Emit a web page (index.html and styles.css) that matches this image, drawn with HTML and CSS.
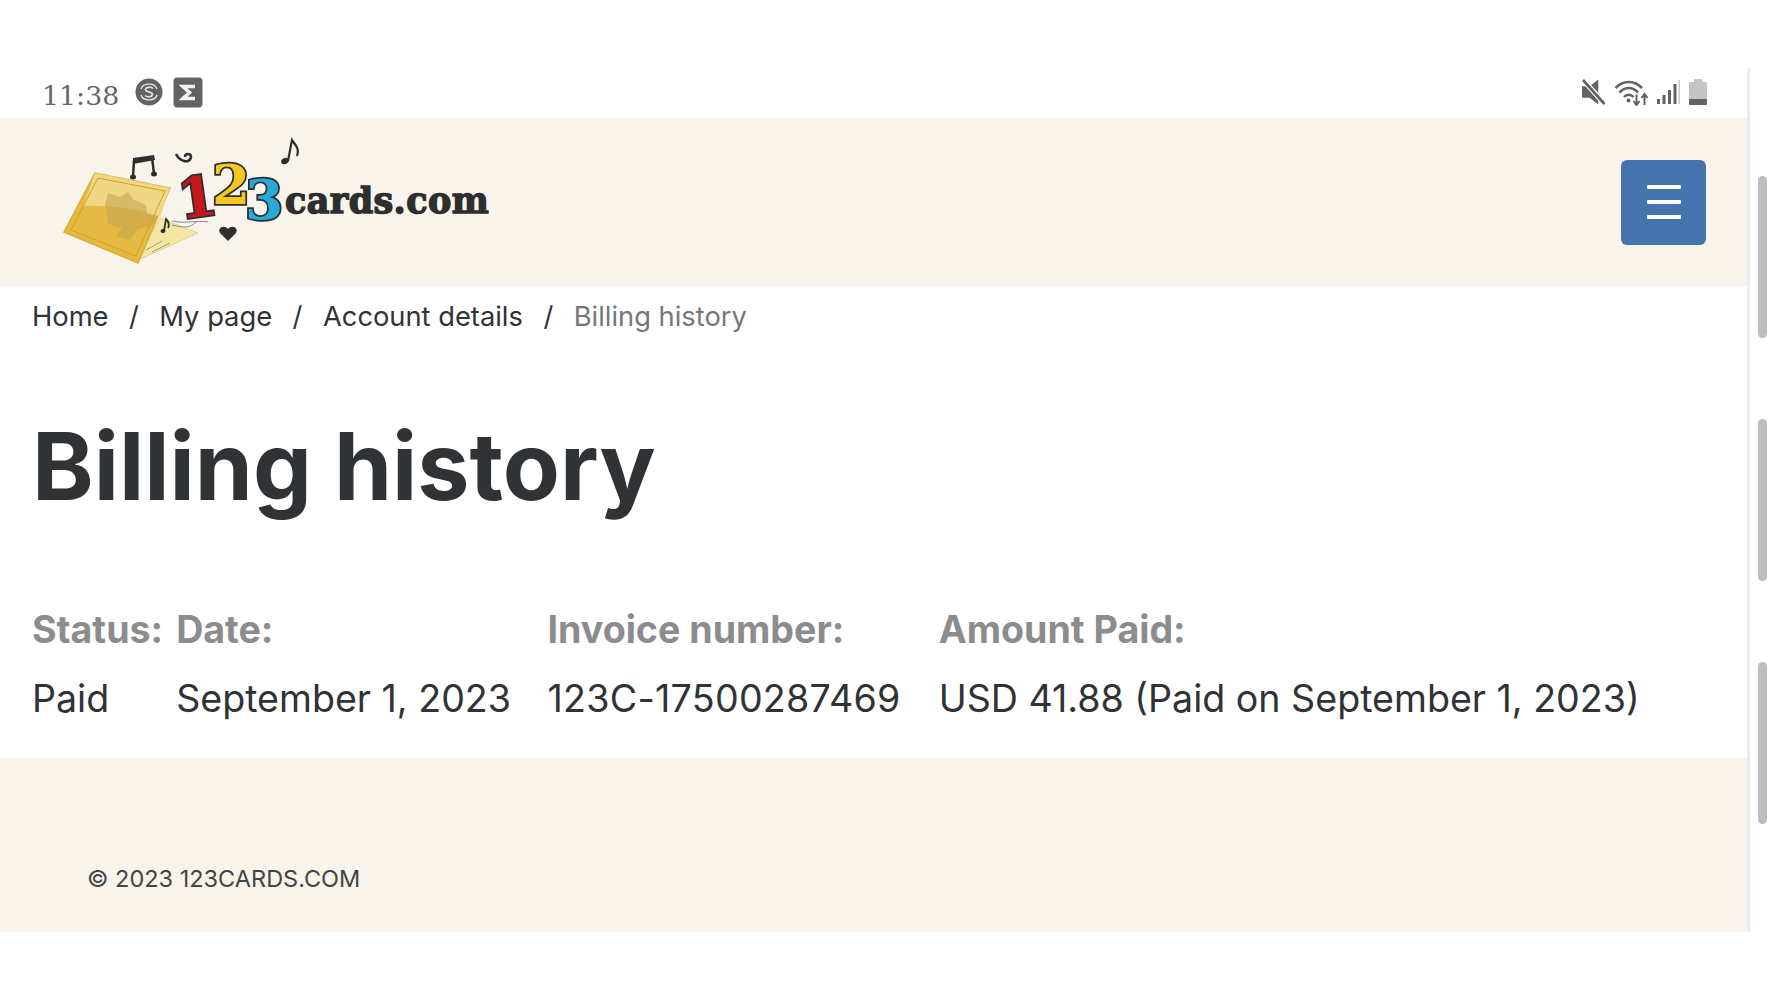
FILE: index.html
```html
<!DOCTYPE html>
<html lang="en">
<head>
  <meta charset="UTF-8">
  <title>Billing history</title>
  <link rel="stylesheet" href="styles.css">
</head>
<body>

  <div class="screen">

    <div class="status-bar">
      <div class="status-left">
        <span class="clock">11:38</span>
        <svg class="status-icon" width="28" height="28" viewBox="0 0 28 28">
          <circle cx="14" cy="14" r="13.500" fill="#636363"/>
          <path d="M6 11C8 4.500 20 4.500 22 11M6 17C8 23.500 20 23.500 22 17" fill="none" stroke="#e4e4e4" stroke-width="1.400"/>
          <path d="M18 10.500C16 8.500 10 9 10.500 12C11 14.500 17.500 13.500 17.500 16.500C17 19 12 19.500 10 17.500" fill="none" stroke="#e4e4e4" stroke-width="1.600"/>
        </svg>
        <svg class="status-icon" width="30" height="31" viewBox="0 0 30 31">
          <rect x="0.500" y="0.500" width="29" height="30" rx="4" fill="#636363"/>
          <path d="M22 9.500H10L16.500 15.500L10 21.500H22" fill="none" stroke="#f2f2f2" stroke-width="3.600"/>
        </svg>
      </div>
      <div class="status-right">
        <svg width="23" height="26" viewBox="0 0 24 26">
          <path d="M0 7H8L17 0V26L8 19H0Z" fill="#636363"/>
          <path d="M1 0L24 26" stroke="#fff" stroke-width="5.500"/>
          <path d="M1 0.500L23.500 25.500" stroke="#636363" stroke-width="2.800"/>
        </svg>
        <svg width="34" height="27" viewBox="0 0 34 27">
          <path d="M1.500 9C9 1 20.500 1 28 9M5.500 13.500C11 7.500 18.500 7.500 24 13.500M10 18C12.500 15 17 15 19.500 18" fill="none" stroke="#636363" stroke-width="2.600"/>
          <circle cx="14.500" cy="21.500" r="2" fill="#636363"/>
          <path d="M22.500 15.500V25M19.500 22L22.500 26L25.500 22M30.500 26V16M27.500 19L30.500 15L33.500 19" fill="none" stroke="#636363" stroke-width="2"/>
        </svg>
        <svg width="23" height="26" viewBox="0 0 23 26">
          <path d="M0 20h3v5H0zM5.500 16h3v9h-3zM11 11h3v14h-3zM16.500 5h3v20h-3z" fill="#636363"/>
          <path d="M21.500 1h1.500v24h-1.500z" fill="#c8c8c8"/>
        </svg>
        <svg width="18" height="26" viewBox="0 0 18 26">
          <path d="M5 0H13V3H17A1 1 0 0 1 18 4V25A1 1 0 0 1 17 26H1A1 1 0 0 1 0 25V4A1 1 0 0 1 1 3H5Z" fill="#c4c4c4"/>
          <path d="M0 20H18V25A1 1 0 0 1 17 26H1A1 1 0 0 1 0 25Z" fill="#636363"/>
        </svg>
      </div>
    </div>

    <header class="site-header">
      <a class="logo" href="#">
        <!-- viewBox uses page coordinates -->
        <svg width="450" height="150" viewBox="60 127 450 150">
          <!-- inner card -->
          <path d="M136 261L198 233L160 218Z" fill="#f4e6a6" stroke="#e2d28a"/>
          <path d="M146 250L162 241M152 252L170 243" stroke="#a89b5c" stroke-width="1"/>
          <!-- front card -->
          <path d="M64 232L95 173L170 188L138 263Z" fill="#e6b942" stroke="#dcae38" stroke-width="1.500"/>
          <path d="M83 206L95 173L170 188L160 217C135 208 110 205 83 206Z" fill="#f1d685"/>
          <path d="M71 230L98 178L165 191L136 256Z" fill="none" stroke="#cf9f2e"/>
          <path d="M105 204L108 193L120 197L128 192L134 200L146 205L147 214L158 216L152 226L138 229L130 240L116 236L122 228L108 224Z" fill="#c7a552" opacity="0.600"/>
          <!-- notes -->
          <path d="M133 177L134 160M154 174L152 157" stroke="#2e2e2e" stroke-width="2.500"/>
          <path d="M133 158L154 155L155 160L133 164Z" fill="#2e2e2e"/>
          <ellipse cx="133" cy="177" rx="3" ry="2.500" fill="#2e2e2e"/>
          <ellipse cx="154" cy="174" rx="3" ry="2.500" fill="#2e2e2e"/>
          <path d="M176 154C180 162 190 164 191 157C191 153 185 153 185 157" fill="none" stroke="#2e2e2e" stroke-width="2.600"/>
          <path d="M288 161L292 140C295 145 300 148 297 156" fill="none" stroke="#2e2e2e" stroke-width="2.200"/>
          <ellipse cx="285" cy="161" rx="4" ry="3" fill="#2e2e2e" transform="rotate(-25 285 161)"/>
          <path d="M164 231L166 219C168 221 170 224 168 228" fill="none" stroke="#2e2e2e" stroke-width="1.800"/>
          <ellipse cx="163" cy="231" rx="2.500" ry="2" fill="#2e2e2e"/>
          <path d="M228 241L220 233C217 228 224 224 228 229C232 224 239 228 236 233Z" fill="#2e2e2e"/>
          <!-- streamers -->
          <path d="M172 221C185 224 196 220 208 222M172 225C185 228 190 228 196 222" fill="none" stroke="#8a8a8a"/>
          <!-- name -->
          <text class="logo-digit" x="181" y="219" fill="#c8161d" transform="rotate(-8 181 219)">1</text>
          <text class="logo-digit" x="212" y="204" fill="#f6c71e">2</text>
          <text class="logo-digit" x="245" y="219" fill="#29a9d6">3</text>
          <text class="logo-text" x="285" y="213">cards.com</text>
        </svg>
      </a>
      <button class="menu-button">
        <span></span><span></span><span></span>
      </button>
    </header>

    <main class="content">
      <nav class="breadcrumb">
        <a href="#">Home</a>
        <span class="sep">/</span>
        <a href="#">My page</a>
        <span class="sep">/</span>
        <a href="#">Account details</a>
        <span class="sep">/</span>
        <span class="current">Billing history</span>
      </nav>

      <h1>Billing history</h1>

      <table class="billing-table">
        <tr>
          <th>Status:</th>
          <th>Date:</th>
          <th>Invoice number:</th>
          <th>Amount Paid:</th>
        </tr>
        <tr>
          <td>Paid</td>
          <td>September 1, 2023</td>
          <td class="invoice">123C-17500287469</td>
          <td>USD 41.88 (Paid on September 1, 2023)</td>
        </tr>
      </table>
    </main>

    <footer class="site-footer">© 2023 123CARDS.COM</footer>

  </div>

  <div class="scrollbar">
    <div class="thumb"></div>
    <div class="thumb"></div>
    <div class="thumb"></div>
  </div>

</body>
</html>
```

FILE: styles.css
```css
body {
  margin: 0;
  height: 1000px;
  overflow: hidden;
  background: #fff;
  font-family: "Inter", "Liberation Sans", sans-serif;
  color: #2f3336;
}
a {
  color: inherit;
  text-decoration: none;
}
.screen {
  width: 1747px;
  margin-top: 68px;
  border-right: 3px solid #ececec;
}
.status-bar {
  height: 50px;
  box-sizing: border-box;
  padding: 0 40px 2px 42px;
  display: flex;
  justify-content: space-between;
  align-items: center;
}
.status-left {
  display: flex;
  align-items: center;
  gap: 10px;
}
.clock {
  font-family: "DejaVu Serif", "Liberation Serif", serif;
  font-size: 26.800px;
  color: #666;
  margin-right: 6px;
  padding-top: 6px;
}
.status-right {
  display: flex;
  align-items: center;
  gap: 9px;
}
.site-header {
  height: 168px;
  background: #f8f4ec;
  display: flex;
  justify-content: space-between;
  align-items: center;
  padding: 0 41px 0 60px;
}
.logo {
  display: block;
  height: 150px;
}
.logo-digit {
  font-family: "DejaVu Serif", serif;
  font-weight: bold;
  font-size: 55px;
  stroke: #2e2e2e;
  stroke-width: 3.500px;
  paint-order: stroke;
}
.logo-text {
  font-family: "DejaVu Serif", serif;
  font-weight: bold;
  font-size: 35px;
  fill: #2e2e2e;
  stroke: #2e2e2e;
  stroke-width: 1.400px;
  letter-spacing: 0.400px;
}
.menu-button {
  width: 85px;
  height: 85px;
  background: #4573ae;
  border: none;
  border-radius: 6px;
  display: flex;
  flex-direction: column;
  align-items: center;
  justify-content: center;
  gap: 11px;
}
.menu-button span {
  width: 34px;
  height: 4px;
  background: #fff;
  border-radius: 1px;
}
.content {
  padding: 15px 32px 0;
  height: 472px;
  box-sizing: border-box;
}
.breadcrumb {
  display: flex;
  gap: 20.500px;
  font-size: 27.300px;
  line-height: 32px;
}
.breadcrumb .current {
  color: #777;
}
h1 {
  margin: 81px 0 0;
  font-size: 93.300px;
  font-weight: 700;
  line-height: 106px;
}
.billing-table {
  margin-top: 76px;
  border-collapse: collapse;
  font-size: 37.600px;
}
.billing-table th,
.billing-table td {
  padding: 0 36.500px 0 0;
  text-align: left;
}
.billing-table th:first-child,
.billing-table td:first-child {
  padding-right: 13px;
}
.billing-table th {
  color: #8c8c8c;
  font-weight: 700;
  height: 66px;
}
.billing-table td {
  height: 72px;
}
.billing-table .invoice {
  letter-spacing: 0.280px;
  padding-right: 38px;
}
.site-footer {
  height: 174px;
  box-sizing: border-box;
  background: #f8f4ec;
  padding: 106px 0 0 87px;
  font-size: 23.500px;
  color: #444;
}
.scrollbar {
  position: absolute;
  top: 176px;
  left: 1758px;
  display: flex;
  flex-direction: column;
  gap: 81px;
}
.thumb {
  width: 9px;
  height: 162px;
  background: #bdbdbd;
  border-radius: 5px;
}
```
